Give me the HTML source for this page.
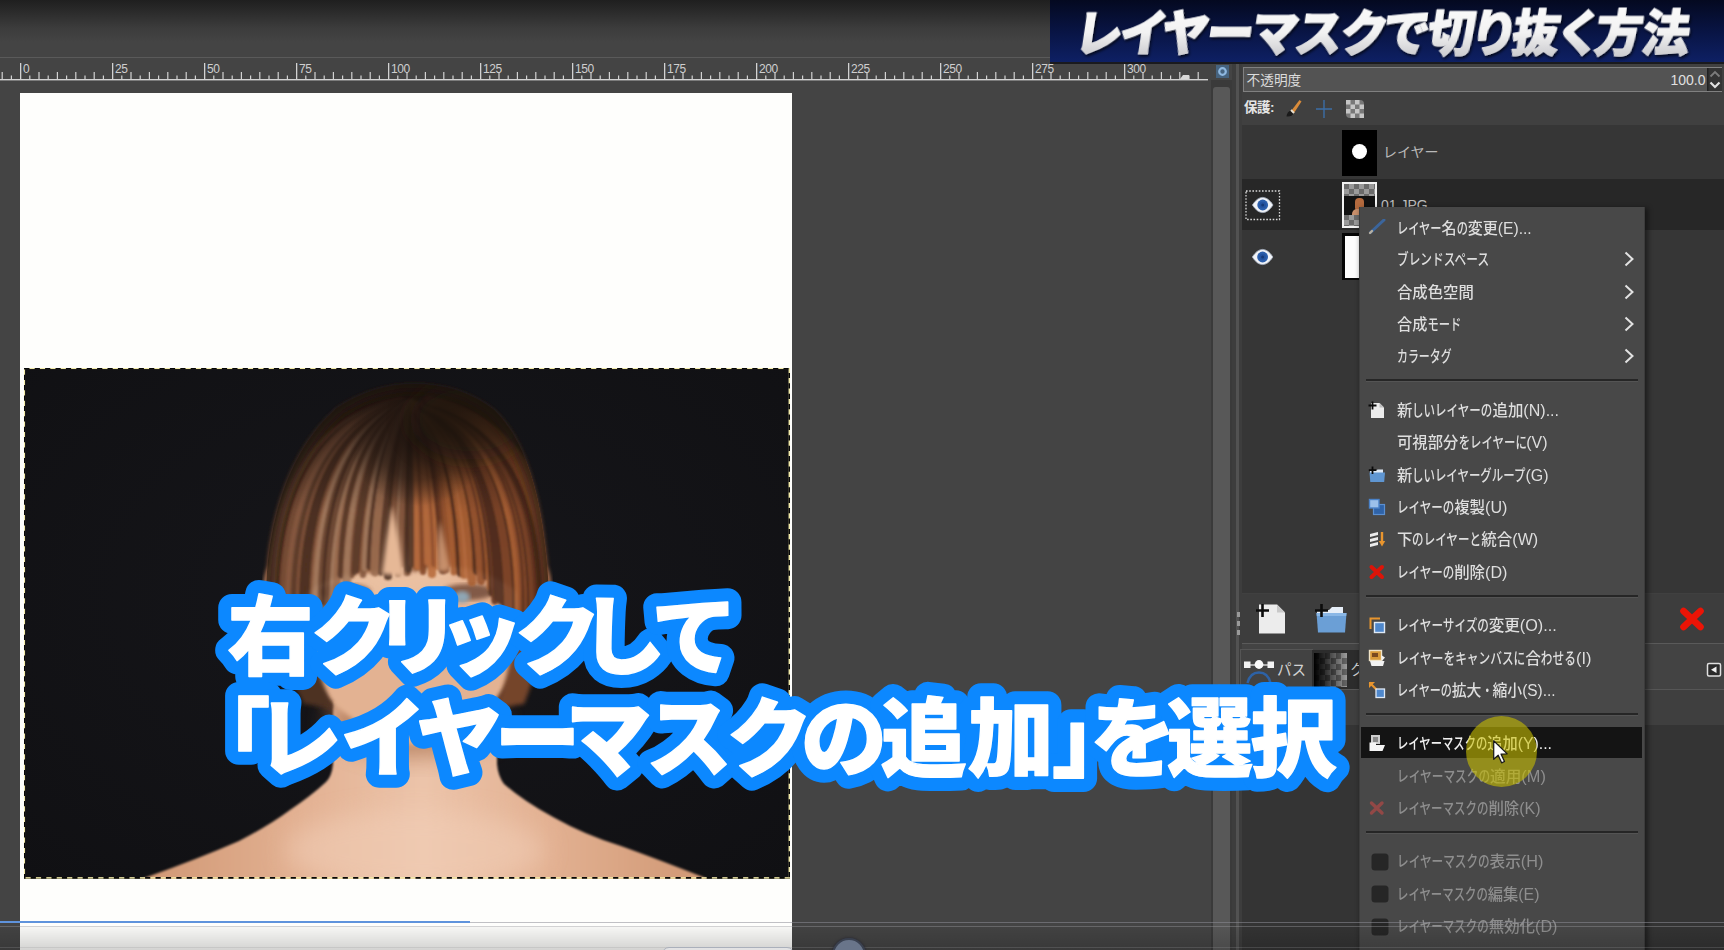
<!DOCTYPE html>
<html lang="ja">
<head>
<meta charset="utf-8">
<title>レイヤーマスクで切り抜く方法</title>
<style>
html,body{margin:0;padding:0;}
html{width:1724px;height:950px;overflow:hidden;}
body{width:1724px;height:950px;overflow:hidden;position:relative;background:#444444;
 font-family:"Liberation Sans","Noto Sans CJK JP",sans-serif;color:#d6d6d6;}
#root{position:absolute;left:0;top:0;width:1724px;height:950px;overflow:hidden;}
.abs{position:absolute;}
#topgrad{left:0;top:0;width:1724px;height:58px;background:linear-gradient(#1f1f1f 0px,#2b2b2b 12px,#3c3c3c 28px,#444 42px,#444 58px);}
#rulerline{left:0;top:57px;width:1232px;height:1px;background:#5a5a5a;}
#ruler{left:0;top:58px;width:1210px;height:24px;overflow:hidden;}
#ruler span{position:absolute;top:5px;font-size:12px;line-height:12px;color:#cfcfcf;letter-spacing:-0.5px;}
#canvas{left:20px;top:93px;width:772px;height:857px;background:#fefefc;}
#photo{left:24px;top:368px;width:766px;height:511px;}
/* scrollbar & divider */
#vtrack{left:1211px;top:80px;width:21px;height:870px;background:#3a3a3a;}
#vthumb{left:1213px;top:87px;width:17px;height:870px;background:#585858;border-radius:3px 3px 0 0;}
#corner{left:1216px;top:64.5px;width:13px;height:13px;background:#46637f;}
#divider{left:1232px;top:62px;width:10px;height:888px;background:#3d3d3d;}
#divider i{position:absolute;left:4px;top:0;width:3px;height:100%;background:#525252;}
/* right panel */
#panel{left:1242px;top:62px;width:482px;height:888px;background:#404040;}
.uitx{white-space:nowrap;}
.mi{font-weight:500;white-space:nowrap;font-size:15.4px;line-height:22px;height:22px;transform-origin:0 50%;font-family:"Liberation Sans","Noto Sans CJK JP",sans-serif;}
.mi .k{display:inline-block;transform:scaleX(0.745);transform-origin:0 50%;}
.mi .a{font-size:16px;}

</style>
</head>
<body>
<div id="root">
<div id="topgrad" class="abs"></div>
<div id="rulerline" class="abs"></div>
<div id="ruler" class="abs"><svg class="abs" style="left:0;top:0" width="1210" height="24" viewBox="0 0 1210 24"><rect x="0" y="21" width="1208" height="1.4" fill="#d2d2d2"/><rect x="1.6" y="14" width="1.2" height="8" fill="#d2d2d2"/><rect x="10.8" y="17.5" width="1.2" height="4.5" fill="#d2d2d2"/><rect x="20.0" y="5" width="1.3" height="17" fill="#d2d2d2"/><rect x="29.2" y="17.5" width="1.2" height="4.5" fill="#d2d2d2"/><rect x="38.4" y="14" width="1.2" height="8" fill="#d2d2d2"/><rect x="47.6" y="17.5" width="1.2" height="4.5" fill="#d2d2d2"/><rect x="56.8" y="14" width="1.2" height="8" fill="#d2d2d2"/><rect x="66.0" y="17.5" width="1.2" height="4.5" fill="#d2d2d2"/><rect x="75.2" y="14" width="1.2" height="8" fill="#d2d2d2"/><rect x="84.4" y="17.5" width="1.2" height="4.5" fill="#d2d2d2"/><rect x="93.6" y="14" width="1.2" height="8" fill="#d2d2d2"/><rect x="102.8" y="17.5" width="1.2" height="4.5" fill="#d2d2d2"/><rect x="112.0" y="5" width="1.3" height="17" fill="#d2d2d2"/><rect x="121.2" y="17.5" width="1.2" height="4.5" fill="#d2d2d2"/><rect x="130.4" y="14" width="1.2" height="8" fill="#d2d2d2"/><rect x="139.6" y="17.5" width="1.2" height="4.5" fill="#d2d2d2"/><rect x="148.8" y="14" width="1.2" height="8" fill="#d2d2d2"/><rect x="158.0" y="17.5" width="1.2" height="4.5" fill="#d2d2d2"/><rect x="167.2" y="14" width="1.2" height="8" fill="#d2d2d2"/><rect x="176.4" y="17.5" width="1.2" height="4.5" fill="#d2d2d2"/><rect x="185.6" y="14" width="1.2" height="8" fill="#d2d2d2"/><rect x="194.8" y="17.5" width="1.2" height="4.5" fill="#d2d2d2"/><rect x="204.0" y="5" width="1.3" height="17" fill="#d2d2d2"/><rect x="213.2" y="17.5" width="1.2" height="4.5" fill="#d2d2d2"/><rect x="222.4" y="14" width="1.2" height="8" fill="#d2d2d2"/><rect x="231.6" y="17.5" width="1.2" height="4.5" fill="#d2d2d2"/><rect x="240.8" y="14" width="1.2" height="8" fill="#d2d2d2"/><rect x="250.0" y="17.5" width="1.2" height="4.5" fill="#d2d2d2"/><rect x="259.2" y="14" width="1.2" height="8" fill="#d2d2d2"/><rect x="268.4" y="17.5" width="1.2" height="4.5" fill="#d2d2d2"/><rect x="277.6" y="14" width="1.2" height="8" fill="#d2d2d2"/><rect x="286.8" y="17.5" width="1.2" height="4.5" fill="#d2d2d2"/><rect x="296.0" y="5" width="1.3" height="17" fill="#d2d2d2"/><rect x="305.2" y="17.5" width="1.2" height="4.5" fill="#d2d2d2"/><rect x="314.4" y="14" width="1.2" height="8" fill="#d2d2d2"/><rect x="323.6" y="17.5" width="1.2" height="4.5" fill="#d2d2d2"/><rect x="332.8" y="14" width="1.2" height="8" fill="#d2d2d2"/><rect x="342.0" y="17.5" width="1.2" height="4.5" fill="#d2d2d2"/><rect x="351.2" y="14" width="1.2" height="8" fill="#d2d2d2"/><rect x="360.4" y="17.5" width="1.2" height="4.5" fill="#d2d2d2"/><rect x="369.6" y="14" width="1.2" height="8" fill="#d2d2d2"/><rect x="378.8" y="17.5" width="1.2" height="4.5" fill="#d2d2d2"/><rect x="388.0" y="5" width="1.3" height="17" fill="#d2d2d2"/><rect x="397.2" y="17.5" width="1.2" height="4.5" fill="#d2d2d2"/><rect x="406.4" y="14" width="1.2" height="8" fill="#d2d2d2"/><rect x="415.6" y="17.5" width="1.2" height="4.5" fill="#d2d2d2"/><rect x="424.8" y="14" width="1.2" height="8" fill="#d2d2d2"/><rect x="434.0" y="17.5" width="1.2" height="4.5" fill="#d2d2d2"/><rect x="443.2" y="14" width="1.2" height="8" fill="#d2d2d2"/><rect x="452.4" y="17.5" width="1.2" height="4.5" fill="#d2d2d2"/><rect x="461.6" y="14" width="1.2" height="8" fill="#d2d2d2"/><rect x="470.8" y="17.5" width="1.2" height="4.5" fill="#d2d2d2"/><rect x="480.0" y="5" width="1.3" height="17" fill="#d2d2d2"/><rect x="489.2" y="17.5" width="1.2" height="4.5" fill="#d2d2d2"/><rect x="498.4" y="14" width="1.2" height="8" fill="#d2d2d2"/><rect x="507.6" y="17.5" width="1.2" height="4.5" fill="#d2d2d2"/><rect x="516.8" y="14" width="1.2" height="8" fill="#d2d2d2"/><rect x="526.0" y="17.5" width="1.2" height="4.5" fill="#d2d2d2"/><rect x="535.2" y="14" width="1.2" height="8" fill="#d2d2d2"/><rect x="544.4" y="17.5" width="1.2" height="4.5" fill="#d2d2d2"/><rect x="553.6" y="14" width="1.2" height="8" fill="#d2d2d2"/><rect x="562.8" y="17.5" width="1.2" height="4.5" fill="#d2d2d2"/><rect x="572.0" y="5" width="1.3" height="17" fill="#d2d2d2"/><rect x="581.2" y="17.5" width="1.2" height="4.5" fill="#d2d2d2"/><rect x="590.4" y="14" width="1.2" height="8" fill="#d2d2d2"/><rect x="599.6" y="17.5" width="1.2" height="4.5" fill="#d2d2d2"/><rect x="608.8" y="14" width="1.2" height="8" fill="#d2d2d2"/><rect x="618.0" y="17.5" width="1.2" height="4.5" fill="#d2d2d2"/><rect x="627.2" y="14" width="1.2" height="8" fill="#d2d2d2"/><rect x="636.4" y="17.5" width="1.2" height="4.5" fill="#d2d2d2"/><rect x="645.6" y="14" width="1.2" height="8" fill="#d2d2d2"/><rect x="654.8" y="17.5" width="1.2" height="4.5" fill="#d2d2d2"/><rect x="664.0" y="5" width="1.3" height="17" fill="#d2d2d2"/><rect x="673.2" y="17.5" width="1.2" height="4.5" fill="#d2d2d2"/><rect x="682.4" y="14" width="1.2" height="8" fill="#d2d2d2"/><rect x="691.6" y="17.5" width="1.2" height="4.5" fill="#d2d2d2"/><rect x="700.8" y="14" width="1.2" height="8" fill="#d2d2d2"/><rect x="710.0" y="17.5" width="1.2" height="4.5" fill="#d2d2d2"/><rect x="719.2" y="14" width="1.2" height="8" fill="#d2d2d2"/><rect x="728.4" y="17.5" width="1.2" height="4.5" fill="#d2d2d2"/><rect x="737.6" y="14" width="1.2" height="8" fill="#d2d2d2"/><rect x="746.8" y="17.5" width="1.2" height="4.5" fill="#d2d2d2"/><rect x="756.0" y="5" width="1.3" height="17" fill="#d2d2d2"/><rect x="765.2" y="17.5" width="1.2" height="4.5" fill="#d2d2d2"/><rect x="774.4" y="14" width="1.2" height="8" fill="#d2d2d2"/><rect x="783.6" y="17.5" width="1.2" height="4.5" fill="#d2d2d2"/><rect x="792.8" y="14" width="1.2" height="8" fill="#d2d2d2"/><rect x="802.0" y="17.5" width="1.2" height="4.5" fill="#d2d2d2"/><rect x="811.2" y="14" width="1.2" height="8" fill="#d2d2d2"/><rect x="820.4" y="17.5" width="1.2" height="4.5" fill="#d2d2d2"/><rect x="829.6" y="14" width="1.2" height="8" fill="#d2d2d2"/><rect x="838.8" y="17.5" width="1.2" height="4.5" fill="#d2d2d2"/><rect x="848.0" y="5" width="1.3" height="17" fill="#d2d2d2"/><rect x="857.2" y="17.5" width="1.2" height="4.5" fill="#d2d2d2"/><rect x="866.4" y="14" width="1.2" height="8" fill="#d2d2d2"/><rect x="875.6" y="17.5" width="1.2" height="4.5" fill="#d2d2d2"/><rect x="884.8" y="14" width="1.2" height="8" fill="#d2d2d2"/><rect x="894.0" y="17.5" width="1.2" height="4.5" fill="#d2d2d2"/><rect x="903.2" y="14" width="1.2" height="8" fill="#d2d2d2"/><rect x="912.4" y="17.5" width="1.2" height="4.5" fill="#d2d2d2"/><rect x="921.6" y="14" width="1.2" height="8" fill="#d2d2d2"/><rect x="930.8" y="17.5" width="1.2" height="4.5" fill="#d2d2d2"/><rect x="940.0" y="5" width="1.3" height="17" fill="#d2d2d2"/><rect x="949.2" y="17.5" width="1.2" height="4.5" fill="#d2d2d2"/><rect x="958.4" y="14" width="1.2" height="8" fill="#d2d2d2"/><rect x="967.6" y="17.5" width="1.2" height="4.5" fill="#d2d2d2"/><rect x="976.8" y="14" width="1.2" height="8" fill="#d2d2d2"/><rect x="986.0" y="17.5" width="1.2" height="4.5" fill="#d2d2d2"/><rect x="995.2" y="14" width="1.2" height="8" fill="#d2d2d2"/><rect x="1004.4" y="17.5" width="1.2" height="4.5" fill="#d2d2d2"/><rect x="1013.6" y="14" width="1.2" height="8" fill="#d2d2d2"/><rect x="1022.8" y="17.5" width="1.2" height="4.5" fill="#d2d2d2"/><rect x="1032.0" y="5" width="1.3" height="17" fill="#d2d2d2"/><rect x="1041.2" y="17.5" width="1.2" height="4.5" fill="#d2d2d2"/><rect x="1050.4" y="14" width="1.2" height="8" fill="#d2d2d2"/><rect x="1059.6" y="17.5" width="1.2" height="4.5" fill="#d2d2d2"/><rect x="1068.8" y="14" width="1.2" height="8" fill="#d2d2d2"/><rect x="1078.0" y="17.5" width="1.2" height="4.5" fill="#d2d2d2"/><rect x="1087.2" y="14" width="1.2" height="8" fill="#d2d2d2"/><rect x="1096.4" y="17.5" width="1.2" height="4.5" fill="#d2d2d2"/><rect x="1105.6" y="14" width="1.2" height="8" fill="#d2d2d2"/><rect x="1114.8" y="17.5" width="1.2" height="4.5" fill="#d2d2d2"/><rect x="1124.0" y="5" width="1.3" height="17" fill="#d2d2d2"/><rect x="1133.2" y="17.5" width="1.2" height="4.5" fill="#d2d2d2"/><rect x="1142.4" y="14" width="1.2" height="8" fill="#d2d2d2"/><rect x="1151.6" y="17.5" width="1.2" height="4.5" fill="#d2d2d2"/><rect x="1160.8" y="14" width="1.2" height="8" fill="#d2d2d2"/><rect x="1170.0" y="17.5" width="1.2" height="4.5" fill="#d2d2d2"/><rect x="1179.2" y="14" width="1.2" height="8" fill="#d2d2d2"/><rect x="1188.4" y="17.5" width="1.2" height="4.5" fill="#d2d2d2"/><rect x="1197.6" y="14" width="1.2" height="8" fill="#d2d2d2"/><path d="M1180 21 L1183 17 L1189 17 L1189 21 Z" fill="#d8d8d8"/></svg><span style="left:23.1px">0</span><span style="left:115.1px">25</span><span style="left:207.1px">50</span><span style="left:299.1px">75</span><span style="left:391.1px">100</span><span style="left:483.1px">125</span><span style="left:575.1px">150</span><span style="left:667.1px">175</span><span style="left:759.1px">200</span><span style="left:851.1px">225</span><span style="left:943.1px">250</span><span style="left:1035.1px">275</span><span style="left:1127.1px">300</span></div>
<div id="canvas" class="abs"></div>
<div id="photo" class="abs"><svg width="766" height="511" viewBox="24 368 766 511" style="position:absolute;left:0;top:0;display:block">
<defs>
<radialGradient id="bgG" cx="0.5" cy="0.45" r="0.75"><stop offset="0" stop-color="#16161a"/><stop offset="1" stop-color="#101013"/></radialGradient>
<linearGradient id="hairG" x1="0" y1="0" x2="0" y2="1"><stop offset="0" stop-color="#2a1d18"/><stop offset="0.35" stop-color="#553626"/><stop offset="0.7" stop-color="#8c5436"/><stop offset="1" stop-color="#87502f"/></linearGradient>
<radialGradient id="partG" cx="0.5" cy="0.5" r="0.5"><stop offset="0" stop-color="#1d130e" stop-opacity="0.95"/><stop offset="0.6" stop-color="#1d130e" stop-opacity="0.55"/><stop offset="1" stop-color="#1d130e" stop-opacity="0"/></radialGradient>
<linearGradient id="topD" x1="0" y1="0" x2="0" y2="1"><stop offset="0" stop-color="#1a110d" stop-opacity="0.9"/><stop offset="1" stop-color="#1a110d" stop-opacity="0"/></linearGradient>
<linearGradient id="shG" x1="0" y1="0" x2="1" y2="0"><stop offset="0" stop-color="#cf9672"/><stop offset="0.28" stop-color="#e2b091"/><stop offset="0.5" stop-color="#ecc4aa"/><stop offset="0.72" stop-color="#e2b091"/><stop offset="1" stop-color="#cf9672"/></linearGradient>
<filter id="b1" x="-10%" y="-10%" width="120%" height="120%"><feGaussianBlur stdDeviation="1.3"/></filter>
<filter id="b2" x="-10%" y="-10%" width="120%" height="120%"><feGaussianBlur stdDeviation="2.2"/></filter>
<filter id="b5" x="-20%" y="-20%" width="140%" height="140%"><feGaussianBlur stdDeviation="6"/></filter>
<filter id="b10" x="-30%" y="-30%" width="160%" height="160%"><feGaussianBlur stdDeviation="12"/></filter>
<clipPath id="pc"><rect x="24" y="368" width="766" height="511"/></clipPath>
<clipPath id="hc"><path d="M268 650 Q263 590 270 545 Q284 455 337 408 Q374 384 414 384 Q460 384 494 410 Q534 448 545 545 Q551 590 548 650 Z"/></clipPath>
</defs>
<g clip-path="url(#pc)">
<rect x="24" y="368" width="766" height="511" fill="url(#bgG)"/>
<!-- back hair behind neck -->
<path d="M300 600 Q296 680 330 712 L350 700 L350 600 Z" fill="#5b3825" filter="url(#b5)"/>
<path d="M525 600 Q532 680 498 712 L478 700 L478 600 Z" fill="#5b3825" filter="url(#b5)"/>
<!-- shoulders -->
<path d="M132 884 L147 877 Q200 858 239 841 Q270 825 290 810 Q312 795 326 782 Q332 776 333 764 L333 700 L497 700 L497 764 Q498 776 504 784 Q525 802 553 817 Q585 835 621 846 Q660 860 703 877 L716 884 Z" fill="url(#shG)" filter="url(#b1)"/>
<ellipse cx="415" cy="850" rx="130" ry="40" fill="#f2cfb8" opacity="0.55" filter="url(#b10)"/>
<!-- neck shadow -->
<ellipse cx="415" cy="722" rx="86" ry="34" fill="#a8704e" opacity="0.75" filter="url(#b10)"/>
<!-- ears -->
<ellipse cx="272" cy="588" rx="8" ry="22" fill="#c98f6c" filter="url(#b2)"/>
<ellipse cx="543" cy="588" rx="8" ry="22" fill="#b97f5c" filter="url(#b2)"/>
<!-- face -->
<path d="M280 560 Q282 650 330 700 Q380 745 412 745 Q450 745 495 700 Q538 650 538 560 Q538 470 410 470 Q280 470 280 560 Z" fill="#e3b292" filter="url(#b2)"/>
<ellipse cx="400" cy="560" rx="60" ry="50" fill="#ecc4a6" opacity="0.8" filter="url(#b10)"/>
<ellipse cx="345" cy="592" rx="26" ry="8" fill="#6a4434" opacity="0.8" filter="url(#b2)"/>
<ellipse cx="468" cy="592" rx="26" ry="8" fill="#6a4434" opacity="0.8" filter="url(#b2)"/>
<ellipse cx="462" cy="597" rx="8" ry="6" fill="#8fa6b4" filter="url(#b2)"/>
<!-- side hair -->
<path d="M274 545 L304 545 Q300 620 316 660 Q324 690 334 708 L304 704 Q280 660 270 610 Z" fill="#4e3021" filter="url(#b2)"/>
<path d="M542 545 L518 545 Q520 620 510 660 Q504 690 496 708 L524 704 Q542 660 546 610 Z" fill="#75442a" filter="url(#b2)"/>
<!-- hair dome -->
<path d="M268 640 Q263 590 270 545 Q284 455 337 408 Q374 384 414 384 Q460 384 494 410 Q534 448 545 545 Q551 590 548 640 Q535 600 512 588 Q480 566 440 566 L412 572 Q402 535 392 500 Q383 540 378 572 Q330 572 300 598 Q278 620 268 640 Z" fill="url(#hairG)" filter="url(#b2)"/>
<g clip-path="url(#hc)"><g fill="none" stroke-linecap="round" filter="url(#b1)" opacity="0.9"><path d="M401 400 Q258 433 274 642" stroke="#6d4a36" stroke-width="6.9"/><path d="M401 400 Q263 433 277 638" stroke="#6d4a36" stroke-width="6.5"/><path d="M402 401 Q266 434 279 636" stroke="#4a2e20" stroke-width="5.1"/><path d="M402 401 Q271 436 283 642" stroke="#7a4f38" stroke-width="6.3"/><path d="M403 402 Q278 436 288 629" stroke="#5a3a2a" stroke-width="5.1"/><path d="M403 402 Q279 437 289 633" stroke="#85593f" stroke-width="7.1"/><path d="M403 402 Q285 438 293 630" stroke="#6d4a36" stroke-width="4.8"/><path d="M403 402 Q288 439 295 634" stroke="#5a3a2a" stroke-width="7.1"/><path d="M404 403 Q293 439 299 625" stroke="#7a4f38" stroke-width="5.6"/><path d="M404 404 Q297 440 302 626" stroke="#4a2e20" stroke-width="5.8"/><path d="M405 403 Q303 440 307 616" stroke="#4a2e20" stroke-width="5.2"/><path d="M405 404 Q305 440 309 613" stroke="#4a2e20" stroke-width="7.1"/><path d="M405 404 Q311 442 313 615" stroke="#7a4f38" stroke-width="7.1"/><path d="M405 406 Q313 444 315 621" stroke="#9a6c50" stroke-width="7.5"/><path d="M406 404 Q316 444 317 618" stroke="#a37a5e" stroke-width="8.2"/><path d="M406 405 Q320 443 321 610" stroke="#6d4a36" stroke-width="6.6"/><path d="M406 402 Q324 443 324 603" stroke="#4a2e20" stroke-width="5.1"/><path d="M407 407 Q328 444 328 605" stroke="#6d4a36" stroke-width="6.5"/><path d="M407 407 Q333 446 332 610" stroke="#a37a5e" stroke-width="5.8"/><path d="M407 408 Q336 445 335 599" stroke="#a37a5e" stroke-width="5.2"/><path d="M408 403 Q339 445 337 596" stroke="#9a6c50" stroke-width="7.2"/><path d="M408 405 Q344 441 341 575" stroke="#5a3a2a" stroke-width="7.0"/><path d="M409 406 Q349 444 346 582" stroke="#7a4f38" stroke-width="7.5"/><path d="M409 408 Q350 445 347 585" stroke="#a37a5e" stroke-width="8.1"/><path d="M409 403 Q355 444 352 576" stroke="#7a4f38" stroke-width="4.8"/><path d="M409 404 Q358 443 354 573" stroke="#5a3a2a" stroke-width="4.7"/><path d="M410 403 Q361 444 357 571" stroke="#5a3a2a" stroke-width="4.6"/><path d="M410 404 Q367 446 363 575" stroke="#85593f" stroke-width="6.1"/><path d="M410 411 Q369 445 365 568" stroke="#a37a5e" stroke-width="6.6"/><path d="M411 404 Q373 445 369 567" stroke="#5a3a2a" stroke-width="5.7"/><path d="M411 403 Q378 446 374 567" stroke="#a37a5e" stroke-width="6.9"/><path d="M411 403 Q379 448 375 572" stroke="#9a6c50" stroke-width="8.9"/><path d="M412 406 Q385 450 381 573" stroke="#5a3a2a" stroke-width="5.3"/><path d="M412 412 Q388 450 384 570" stroke="#5a3a2a" stroke-width="5.5"/><path d="M413 413 Q391 452 388 576" stroke="#4a2e20" stroke-width="8.2"/><path d="M413 410 Q395 450 392 565" stroke="#5a3a2a" stroke-width="4.6"/><path d="M413 407 Q396 450 393 565" stroke="#7a4f38" stroke-width="8.8"/><path d="M413 416 Q400 454 398 574" stroke="#a37a5e" stroke-width="6.1"/><path d="M414 406 Q403 451 401 564" stroke="#85593f" stroke-width="7.3"/><path d="M414 410 Q408 455 407 572" stroke="#7a4f38" stroke-width="8.1"/><path d="M414 416 Q409 455 408 569" stroke="#4a2e20" stroke-width="7.9"/><path d="M415 415 Q413 454 413 563" stroke="#5a3a2a" stroke-width="8.1"/><path d="M415 409 Q418 454 418 566" stroke="#b86c3e" stroke-width="7.8"/><path d="M415 406 Q419 453 420 562" stroke="#b86c3e" stroke-width="8.1"/><path d="M416 417 Q422 455 423 572" stroke="#86482a" stroke-width="6.1"/><path d="M416 404 Q426 451 428 562" stroke="#b86c3e" stroke-width="7.4"/><path d="M417 409 Q430 454 432 574" stroke="#b86c3e" stroke-width="8.2"/><path d="M417 407 Q432 450 435 564" stroke="#96522e" stroke-width="7.1"/><path d="M417 405 Q435 450 438 567" stroke="#b86c3e" stroke-width="6.1"/><path d="M417 414 Q439 450 443 570" stroke="#643622" stroke-width="8.6"/><path d="M418 409 Q443 449 446 570" stroke="#7a4228" stroke-width="6.5"/><path d="M418 412 Q445 447 449 563" stroke="#96522e" stroke-width="6.6"/><path d="M419 406 Q450 448 454 572" stroke="#a85e32" stroke-width="7.0"/><path d="M419 409 Q454 446 458 566" stroke="#96522e" stroke-width="5.7"/><path d="M419 408 Q457 447 461 573" stroke="#4e2c1a" stroke-width="8.6"/><path d="M419 408 Q460 447 464 575" stroke="#a85e32" stroke-width="7.6"/><path d="M420 407 Q464 446 468 575" stroke="#b86c3e" stroke-width="7.6"/><path d="M420 405 Q468 447 472 582" stroke="#a85e32" stroke-width="8.7"/><path d="M421 403 Q472 443 476 572" stroke="#a85e32" stroke-width="4.8"/><path d="M421 408 Q474 443 477 571" stroke="#4e2c1a" stroke-width="8.5"/><path d="M421 408 Q477 444 481 581" stroke="#96522e" stroke-width="8.5"/><path d="M422 409 Q483 442 486 577" stroke="#643622" stroke-width="6.7"/><path d="M422 403 Q487 443 490 587" stroke="#a85e32" stroke-width="6.8"/><path d="M422 404 Q489 445 491 594" stroke="#4e2c1a" stroke-width="4.6"/><path d="M423 402 Q493 445 495 601" stroke="#643622" stroke-width="7.3"/><path d="M423 408 Q497 443 498 597" stroke="#4e2c1a" stroke-width="8.9"/><path d="M423 402 Q500 444 501 602" stroke="#4e2c1a" stroke-width="5.7"/><path d="M423 407 Q504 444 504 607" stroke="#4e2c1a" stroke-width="5.7"/><path d="M424 405 Q508 445 507 617" stroke="#86482a" stroke-width="4.9"/><path d="M424 404 Q511 444 510 616" stroke="#7a4228" stroke-width="8.7"/><path d="M425 402 Q517 443 515 621" stroke="#4e2c1a" stroke-width="4.8"/><path d="M425 403 Q522 442 519 618" stroke="#a85e32" stroke-width="8.7"/><path d="M425 403 Q524 440 521 614" stroke="#96522e" stroke-width="5.0"/><path d="M425 402 Q528 440 524 615" stroke="#643622" stroke-width="5.9"/><path d="M426 402 Q534 439 528 623" stroke="#96522e" stroke-width="6.1"/><path d="M426 401 Q535 439 530 623" stroke="#4e2c1a" stroke-width="7.0"/><path d="M426 403 Q540 439 533 629" stroke="#7a4228" stroke-width="8.2"/><path d="M427 402 Q545 438 537 632" stroke="#643622" stroke-width="6.8"/><path d="M427 401 Q550 439 541 643" stroke="#4e2c1a" stroke-width="7.7"/><path d="M428 401 Q554 436 544 636" stroke="#7a4228" stroke-width="5.1"/><path d="M428 401 Q557 437 545 643" stroke="#96522e" stroke-width="4.9"/><path d="M428 401 Q564 436 550 649" stroke="#96522e" stroke-width="5.6"/><path d="M428 400 Q566 434 552 643" stroke="#a85e32" stroke-width="5.7"/><path d="M429 400 Q573 434 557 655" stroke="#96522e" stroke-width="8.8"/></g>
<rect x="250" y="380" width="320" height="130" fill="url(#topD)"/>
<path d="M268 650 Q263 590 270 545 Q284 455 337 408 Q374 384 414 384 Q460 384 494 410 Q534 448 545 545 Q551 590 548 650" fill="none" stroke="#24160f" stroke-width="16" opacity="0.75" filter="url(#b5)"/>
<ellipse cx="418" cy="440" rx="70" ry="66" fill="url(#partG)"/>
<ellipse cx="470" cy="420" rx="60" ry="40" fill="#1d130e" opacity="0.45" filter="url(#b10)"/>
</g>
<!-- forehead gap -->
<path d="M392 506 Q386 540 382 574 L404 576 Q399 540 392 506 Z" fill="#e6b896" filter="url(#b2)"/>
<path d="M440 520 Q436 550 438 572 L450 570 Q446 548 440 520 Z" fill="#d9a27c" opacity="0.8" filter="url(#b2)"/>
</g>
<!-- layer boundary marching ants -->
<rect x="24.3" y="368.3" width="765" height="509.6" fill="none" stroke="#f2eaa8" stroke-width="1.5"/>
<rect x="24.3" y="368.3" width="765" height="509.6" fill="none" stroke="#080808" stroke-width="1.7" stroke-dasharray="5.2 5.2"/>
</svg></div>
<div id="vtrack" class="abs"></div>
<div id="vthumb" class="abs"></div>
<div id="corner" class="abs"><svg width="13" height="13" viewBox="0 0 13 13" style="display:block"><circle cx="6.5" cy="6.5" r="3.3" fill="none" stroke="#8fb8e0" stroke-width="2.2"/></svg></div>
<div id="divider" class="abs"><i></i></div>
<div id="panel" class="abs"></div>
<div id="pn">
<!-- opacity -->
<div class="abs" style="left:1243px;top:67px;width:477px;height:23px;background:#535353;border:1px solid #808080;"></div>
<div class="abs uitx" style="left:1246.5px;top:71.5px;font-size:13.7px;line-height:18px;color:#dcdcdc;">不透明度</div>
<div class="abs uitx" style="left:1640px;top:71px;width:65.5px;text-align:right;font-size:14px;line-height:18px;color:#e0e0e0;">100.0</div>
<svg class="abs" style="left:1707px;top:68px" width="15" height="23" viewBox="0 0 15 23"><rect x="0" y="0" width="15" height="23" fill="#343434"/><rect x="0" y="0" width="1.5" height="23" fill="#222"/><path d="M3.5 8.5 L8 4 L12.5 8.5" stroke="#7c7c7c" stroke-width="1.8" fill="none"/><path d="M3.5 14.5 L8 19 L12.5 14.5" stroke="#e0e0e0" stroke-width="2.2" fill="none"/></svg>
<!-- protect -->
<div class="abs uitx" style="left:1244px;top:98px;font-size:13.5px;line-height:19px;color:#e4e4e4;font-weight:bold;letter-spacing:-0.5px;">保護:</div>
<svg class="abs" style="left:1284px;top:98px" width="90" height="22" viewBox="0 0 90 22">
<path d="M2.5 18.5 Q3 13.5 7 12.5 L9.5 15 Q8.5 19 2.5 18.5 Z" fill="#1a1a1a"/>
<path d="M7.5 12.5 L15.5 2 L17.5 3.5 L10 15 Z" fill="#d98b3a"/>
<path d="M7 12 L10 15" stroke="#e8e0d0" stroke-width="2"/>
<path d="M40 2 V20 M32 11 H48" stroke="#3b6da6" stroke-width="1.4"/>
<g fill="#c6c6c6"><rect x="62" y="2" width="18" height="18" rx="4" fill="#787878"/>
<rect x="62" y="2" width="4.5" height="4.5"/><rect x="71" y="2" width="4.5" height="4.5"/><rect x="66.5" y="6.5" width="4.5" height="4.5"/><rect x="75.5" y="6.5" width="4.5" height="4.5"/><rect x="62" y="11" width="4.5" height="4.5"/><rect x="71" y="11" width="4.5" height="4.5"/><rect x="66.5" y="15.5" width="4.5" height="4.5"/><rect x="75.5" y="15.5" width="4.5" height="4.5"/></g>
</svg>
<!-- layer list -->
<div class="abs" style="left:1242px;top:124.5px;width:482px;height:468.5px;background:#363636;"></div>
<div class="abs" style="left:1242px;top:179px;width:482px;height:51px;background:#272727;"></div>
<!-- row1 -->
<div class="abs" style="left:1342px;top:130px;width:35px;height:46px;background:#000;"></div>
<div class="abs" style="left:1351.5px;top:144px;width:15px;height:15px;border-radius:50%;background:#fff;"></div>
<div class="abs uitx" style="left:1383px;top:142px;font-size:14px;line-height:20px;color:#b9b9b9;">レイヤー</div>
<!-- row2 -->
<svg class="abs" style="left:1245px;top:190px" width="36" height="31" viewBox="0 0 36 31"><rect x="1" y="1" width="33.5" height="28.5" fill="none" stroke="#d8d8d8" stroke-width="1.3" stroke-dasharray="1.6 1.6"/>
<g transform="translate(17.7 15)"><path d="M-10.3 0 Q-5.5 -7.6 0 -7.6 Q5.5 -7.6 10.3 0 Q5.5 7.6 0 7.6 Q-5.5 7.6 -10.3 0 Z" fill="#f2f4f8" stroke="#aab4c4" stroke-width="0.8"/><circle r="5.4" fill="#2c5fac"/><circle r="3.3" fill="#2453a0"/><circle r="1.5" fill="#163a78"/></g></svg>
<div class="abs" style="left:1342px;top:182px;width:31px;height:42px;border:2px solid #f2f2f2;background:#111;overflow:hidden;">
 <div style="position:absolute;left:0;top:0;width:31px;height:12px;background:repeating-conic-gradient(#9a9a9a 0% 25%,#6a6a6a 0% 50%) 0 0/10px 10px;"></div>
 <div style="position:absolute;left:0;top:31px;width:31px;height:12px;background:repeating-conic-gradient(#9a9a9a 0% 25%,#6a6a6a 0% 50%) 0 0/10px 10px;"></div>
 <div style="position:absolute;left:11px;top:14px;width:9px;height:12px;border-radius:4px 4px 2px 2px;background:#b46a3e;"></div>
 <div style="position:absolute;left:8px;top:25px;width:15px;height:6px;border-radius:5px 5px 0 0;background:#c9906c;"></div>
</div>
<div class="abs uitx" style="left:1381px;top:195px;font-size:14px;line-height:20px;color:#bdbdbd;">01.JPG</div>
<!-- row3 -->
<svg class="abs" style="left:1250px;top:248px" width="26" height="20" viewBox="0 0 26 20"><g transform="translate(12.6 9)"><path d="M-10.3 0 Q-5.5 -7.6 0 -7.6 Q5.5 -7.6 10.3 0 Q5.5 7.6 0 7.6 Q-5.5 7.6 -10.3 0 Z" fill="#f2f4f8" stroke="#aab4c4" stroke-width="0.8"/><circle r="5.4" fill="#2c5fac"/><circle r="3.3" fill="#2453a0"/><circle r="1.5" fill="#163a78"/></g></svg>
<div class="abs" style="left:1342px;top:233px;width:35px;height:47px;background:#050505;"></div>
<div class="abs" style="left:1344.5px;top:236px;width:30px;height:41.5px;background:#fdfdfd;"></div>
<!-- toolbar -->
<div class="abs" style="left:1242px;top:593.5px;width:482px;height:50px;background:#3d3d3d;"></div>
<div class="abs" style="left:1242px;top:643px;width:482px;height:1px;background:#5a5a5a;"></div>
<div class="abs" style="left:1237px;top:612px;width:3px;height:25px;background:repeating-linear-gradient(#9a9a9a 0 5px,transparent 5px 9px);"></div>
<svg class="abs" style="left:1254px;top:602px" width="34" height="34" viewBox="0 0 34 34"><path d="M5 2.5 H23 L31 10.5 V31.5 H5 Z" fill="#ececec"/><path d="M23 2.5 V10.5 H31 Z" fill="#c8c8c8"/><path d="M8.5 2 V15 M2 8.5 H15" stroke="#0c0c0c" stroke-width="2.6"/></svg>
<svg class="abs" style="left:1313px;top:602px" width="36" height="34" viewBox="0 0 36 34"><path d="M4 8 H16 L19 5 H30 V12 H4 Z" fill="#e6eef8"/><path d="M3.5 11 H33.5 L32 30.5 H5 Z" fill="#6b9fd6"/><path d="M3.5 11 H33.5 L33.2 14 H3.8 Z" fill="#8ab7e6"/><path d="M8.5 2 V15 M2 8.5 H15" stroke="#0c0c0c" stroke-width="2.6"/></svg>
<svg class="abs" style="left:1678px;top:606px" width="28" height="26" viewBox="0 0 28 26"><path d="M5.5 5 L22.5 21 M22.5 5 L5.5 21" stroke="#ec1406" stroke-width="6.6" stroke-linecap="round"/></svg>
<!-- tabs row -->
<div class="abs" style="left:1242px;top:644px;width:482px;height:45px;background:#434343;"></div>
<div class="abs" style="left:1242px;top:689px;width:482px;height:1px;background:#565656;"></div>
<div class="abs" style="left:1240px;top:649px;width:71px;height:41px;border:1px solid #555;border-bottom:none;background:#424242;"></div>
<svg class="abs" style="left:1242px;top:656px" width="34" height="32" viewBox="0 0 34 32"><path d="M3 9 H31" stroke="#dcdcdc" stroke-width="1.4"/><rect x="2" y="5.5" width="6.5" height="6.5" fill="#f2f2f2"/><rect x="25.5" y="5.5" width="6.5" height="6.5" fill="#f2f2f2"/><circle cx="17" cy="8.5" r="4.4" fill="#fafafa"/><path d="M5.5 27 Q8 16.5 17 16.5 Q26 16.5 28.5 27" stroke="#2d62a6" stroke-width="2.4" fill="none"/></svg>
<div class="abs uitx" style="left:1277px;top:660px;font-size:14.5px;line-height:20px;color:#d2d2d2;">パス</div>
<div class="abs" style="left:1312px;top:650px;width:60px;height:39px;background:#2c2c2c;"></div>
<div class="abs" style="left:1314px;top:653px;width:33px;height:34px;background:linear-gradient(90deg,#000 0%,rgba(0,0,0,0.75) 30%,rgba(0,0,0,0) 100%),repeating-conic-gradient(#9c9c9c 0% 25%,#666 0% 50%) 0 0/11px 11px;"></div>
<div class="abs uitx" style="left:1350px;top:660px;font-size:14.5px;line-height:20px;color:#d2d2d2;">ク</div>
<svg class="abs" style="left:1705.5px;top:662px" width="16" height="16" viewBox="0 0 16 16"><rect x="1.5" y="1.5" width="13" height="12.5" rx="1.5" fill="#2a2a2a" stroke="#e0e0e0" stroke-width="1.5"/><path d="M10.5 4.5 V11 L5 7.75 Z" fill="#f0f0f0"/></svg>
<!-- lower -->
<div class="abs" style="left:1242px;top:690px;width:482px;height:35px;background:#3f3f3f;"></div>
<div class="abs" style="left:1242px;top:725px;width:482px;height:225px;background:#343434;"></div>
</div>

<div id="menu" class="abs" style="left:1359px;top:206.5px;width:286px;height:760px;background:#484848;box-shadow:2px 2px 5px 1px rgba(0,0,0,0.45), inset 1px 0 0 #3c3c3c, inset -1px 0 0 #3c3c3c;"></div>
<div class="abs mi" id="mi0" style="left:1397px;top:217.6px;color:#dedede;transform:scaleX(0.9777);"><span class="k" style="margin-right:-15.71px">レイヤー</span>名<span class="k" style="margin-right:-3.93px">の</span>変更<span class="a">(E)...</span></div>
<div class="abs" style="left:1368.0px;top:218.6px;width:18px;height:18px;"><svg viewBox="0 0 18 18" width="18" height="18"><path d="M2.5 13.5 L16 1" stroke="#3b659c" stroke-width="3" stroke-linecap="round"/><path d="M2 14 L4 12" stroke="#b8b0a0" stroke-width="2.4" stroke-linecap="round"/></svg></div>
<div class="abs mi" id="mi1" style="left:1397px;top:249.3px;color:#dedede;transform:scaleX(1.0192);"><span class="k" style="margin-right:-31.42px">ブレンドスペース</span></div>
<svg class="abs" style="left:1622px;top:250.3px" width="14" height="18" viewBox="0 0 14 18"><path d="M3.5 2.5 L10.5 9 L3.5 15.5" stroke="#e2e2e2" stroke-width="2" fill="none" stroke-linejoin="miter"/></svg>
<div class="abs mi" id="mi2" style="left:1397px;top:281.6px;color:#dedede;transform:scaleX(0.9978);">合成色空間</div>
<svg class="abs" style="left:1622px;top:282.6px" width="14" height="18" viewBox="0 0 14 18"><path d="M3.5 2.5 L10.5 9 L3.5 15.5" stroke="#e2e2e2" stroke-width="2" fill="none" stroke-linejoin="miter"/></svg>
<div class="abs mi" id="mi3" style="left:1397px;top:313.6px;color:#dedede;transform:scaleX(0.9844);">合成<span class="k" style="margin-right:-11.78px">モード</span></div>
<svg class="abs" style="left:1622px;top:314.6px" width="14" height="18" viewBox="0 0 14 18"><path d="M3.5 2.5 L10.5 9 L3.5 15.5" stroke="#e2e2e2" stroke-width="2" fill="none" stroke-linejoin="miter"/></svg>
<div class="abs mi" id="mi4" style="left:1397px;top:345.9px;color:#dedede;transform:scaleX(0.9539);"><span class="k" style="margin-right:-19.64px">カラータグ</span></div>
<svg class="abs" style="left:1622px;top:346.9px" width="14" height="18" viewBox="0 0 14 18"><path d="M3.5 2.5 L10.5 9 L3.5 15.5" stroke="#e2e2e2" stroke-width="2" fill="none" stroke-linejoin="miter"/></svg>
<div class="abs" style="left:1366px;top:379.0px;width:272px;height:2px;background:#262626;"></div><div class="abs" style="left:1366px;top:381.0px;width:272px;height:1px;background:#545454;"></div>
<div class="abs mi" id="mi5" style="left:1397px;top:400.0px;color:#dedede;transform:scaleX(1.0028);">新<span class="k" style="margin-right:-27.49px">しいレイヤーの</span>追加<span class="a">(N)...</span></div>
<div class="abs" style="left:1368.0px;top:401.0px;width:18px;height:18px;"><svg viewBox="0 0 18 18" width="18" height="18"><path d="M3 2 H11.5 L16 6.5 V17 H3 Z" fill="#ececec"/><path d="M11.5 2 V6.5 H16 Z" fill="#bdbdbd"/><path d="M4.5 0.5 V8.5 M0.5 4.5 H8.5" stroke="#0a0a0a" stroke-width="1.8"/></svg></div>
<div class="abs mi" id="mi6" style="left:1397px;top:432.2px;color:#dedede;transform:scaleX(0.9950);">可視部分<span class="k" style="margin-right:-23.56px">をレイヤーに</span><span class="a">(V)</span></div>
<div class="abs mi" id="mi7" style="left:1397px;top:464.5px;color:#dedede;transform:scaleX(0.9988);">新<span class="k" style="margin-right:-39.27px">しいレイヤーグループ</span><span class="a">(G)</span></div>
<div class="abs" style="left:1368.0px;top:465.5px;width:18px;height:18px;"><svg viewBox="0 0 18 18" width="18" height="18"><path d="M2 5 H8 L9.5 3.5 H15 V7 H2 Z" fill="#dfe9f5"/><path d="M1.5 6.5 H17 L16.2 16 H2.3 Z" fill="#5f96d2"/><path d="M4.5 0.5 V8 M0.8 4.2 H8.2" stroke="#0a0a0a" stroke-width="1.8"/></svg></div>
<div class="abs mi" id="mi8" style="left:1397px;top:496.8px;color:#dedede;transform:scaleX(1.0046);"><span class="k" style="margin-right:-19.64px">レイヤーの</span>複製<span class="a">(U)</span></div>
<div class="abs" style="left:1368.0px;top:497.8px;width:18px;height:18px;"><svg viewBox="0 0 18 18" width="18" height="18"><rect x="5.5" y="6.5" width="11" height="10" fill="#2f63a8" stroke="#5b8fd0" stroke-width="1.2"/><rect x="1.5" y="1.5" width="9.5" height="8.5" fill="#9cc0ea" stroke="#4a82c8" stroke-width="1.4"/></svg></div>
<div class="abs mi" id="mi9" style="left:1397px;top:529.2px;color:#dedede;transform:scaleX(1.0063);">下<span class="k" style="margin-right:-23.56px">のレイヤーと</span>統合<span class="a">(W)</span></div>
<div class="abs" style="left:1368.0px;top:530.2px;width:18px;height:18px;"><svg viewBox="0 0 18 18" width="18" height="18"><path d="M2 4 L10 2 L10 5 L2 7 Z M2 9 L10 7 L10 10 L2 12 Z M2 14 L10 12 L10 15 L2 17 Z" fill="#ececec"/><path d="M14 2 V13" stroke="#e8952e" stroke-width="2.4"/><path d="M10.8 11 H17.2 L14 16.5 Z" fill="#e8952e"/></svg></div>
<div class="abs mi" id="mi10" style="left:1397px;top:561.6px;color:#dedede;transform:scaleX(1.0046);"><span class="k" style="margin-right:-19.64px">レイヤーの</span>削除<span class="a">(D)</span></div>
<div class="abs" style="left:1368.0px;top:562.6px;width:18px;height:18px;"><svg viewBox="0 0 18 18" width="18" height="18"><path d="M3.5 4 L14 14 M14 4 L3.5 14" stroke="#dd1408" stroke-width="4" stroke-linecap="round"/></svg></div>
<div class="abs" style="left:1366px;top:595.0px;width:272px;height:2px;background:#262626;"></div><div class="abs" style="left:1366px;top:597.0px;width:272px;height:1px;background:#545454;"></div>
<div class="abs mi" id="mi11" style="left:1397px;top:615.0px;color:#dedede;transform:scaleX(1.0125);"><span class="k" style="margin-right:-31.42px">レイヤーサイズの</span>変更<span class="a">(O)...</span></div>
<div class="abs" style="left:1368.0px;top:616.0px;width:18px;height:18px;"><svg viewBox="0 0 18 18" width="18" height="18"><path d="M2.5 13 V2.5 H12" stroke="#e8952e" stroke-width="2" fill="none"/><rect x="6.5" y="6.5" width="10" height="10" fill="#4f88cc" stroke="#dfe9f5" stroke-width="1.4"/></svg></div>
<div class="abs mi" id="mi12" style="left:1397px;top:647.6px;color:#dedede;transform:scaleX(1.0200);"><span class="k" style="margin-right:-43.20px">レイヤーをキャンバスに</span>合<span class="k" style="margin-right:-11.78px">わせる</span><span class="a">(I)</span></div>
<div class="abs" style="left:1368.0px;top:648.6px;width:18px;height:18px;"><svg viewBox="0 0 18 18" width="18" height="18"><rect x="1.5" y="1.5" width="12" height="10" fill="#d89a3a" stroke="#f1e4c8" stroke-width="1.4"/><rect x="4" y="4" width="6" height="4" fill="#7a4a20"/><path d="M2 12 H16.5 L15 17 H3.5 Z" fill="#f2f2f2"/><path d="M13 6 L17 8.5 L14 12" fill="#f2f2f2"/></svg></div>
<div class="abs mi" id="mi13" style="left:1397px;top:680.4px;color:#dedede;transform:scaleX(0.9634);"><span class="k" style="margin-right:-19.64px">レイヤーの</span>拡大<span class="k" style="margin-right:-3.93px">・</span>縮小<span class="a">(S)...</span></div>
<div class="abs" style="left:1368.0px;top:681.4px;width:18px;height:18px;"><svg viewBox="0 0 18 18" width="18" height="18"><path d="M1.5 1.5 L10 10" stroke="#e8952e" stroke-width="2.2"/><path d="M1 1 H7 L1 7 Z" fill="#e8952e"/><rect x="8" y="8" width="8.5" height="8.5" fill="#4f88cc" stroke="#dfe9f5" stroke-width="1.3"/></svg></div>
<div class="abs" style="left:1366px;top:713.0px;width:272px;height:2px;background:#262626;"></div><div class="abs" style="left:1366px;top:715.0px;width:272px;height:1px;background:#545454;"></div>
<div class="abs" style="left:1361px;top:727px;width:281px;height:31px;background:#141414;"></div>
<div class="abs mi" id="mi14" style="left:1397px;top:732.5px;color:#f0f0f0;transform:scaleX(0.9889);"><span class="k" style="margin-right:-31.42px">レイヤーマスクの</span>追加<span class="a">(Y)...</span></div>
<div class="abs" style="left:1368.0px;top:733.5px;width:18px;height:18px;"><svg viewBox="0 0 18 18" width="18" height="18"><rect x="3" y="1" width="9" height="9" fill="#cfcfcf"/><rect x="5" y="3" width="5" height="5" fill="#8a8a8a"/><path d="M1.5 8.5 H8 V11 H17 L14.5 17 H1.5 Z" fill="#f4f4f4"/></svg></div>
<div class="abs mi" id="mi15" style="left:1397px;top:765.6px;color:#8e8e8e;transform:scaleX(1.0189);"><span class="k" style="margin-right:-31.42px">レイヤーマスクの</span>適用<span class="a">(M)</span></div>
<div class="abs mi" id="mi16" style="left:1397px;top:798.0px;color:#8e8e8e;transform:scaleX(1.0015);"><span class="k" style="margin-right:-31.42px">レイヤーマスクの</span>削除<span class="a">(K)</span></div>
<div class="abs" style="left:1368.0px;top:799.0px;width:18px;height:18px;"><svg viewBox="0 0 18 18" width="18" height="18"><path d="M3.5 4 L14 14 M14 4 L3.5 14" stroke="#a04846" stroke-width="3.4" stroke-linecap="round" opacity="0.85"/></svg></div>
<div class="abs" style="left:1366px;top:831.4px;width:272px;height:2px;background:#262626;"></div><div class="abs" style="left:1366px;top:833.4px;width:272px;height:1px;background:#545454;"></div>
<div class="abs mi" id="mi17" style="left:1397px;top:851.0px;color:#8e8e8e;transform:scaleX(1.0140);"><span class="k" style="margin-right:-31.42px">レイヤーマスクの</span>表示<span class="a">(H)</span></div>
<div class="abs" style="left:1371.0px;top:852.5px;width:18px;height:18px;"><svg viewBox="0 0 18 18" width="18" height="18"><rect x="0.5" y="0.5" width="17" height="17" rx="3.5" fill="#262626"/></svg></div>
<div class="abs mi" id="mi18" style="left:1397px;top:883.6px;color:#8e8e8e;transform:scaleX(0.9938);"><span class="k" style="margin-right:-31.42px">レイヤーマスクの</span>編集<span class="a">(E)</span></div>
<div class="abs" style="left:1371.0px;top:885.1px;width:18px;height:18px;"><svg viewBox="0 0 18 18" width="18" height="18"><rect x="0.5" y="0.5" width="17" height="17" rx="3.5" fill="#262626"/></svg></div>
<div class="abs mi" id="mi19" style="left:1397px;top:916.0px;color:#8e8e8e;transform:scaleX(1.0046);"><span class="k" style="margin-right:-31.42px">レイヤーマスクの</span>無効化<span class="a">(D)</span></div>
<div class="abs" style="left:1371.0px;top:917.5px;width:18px;height:18px;"><svg viewBox="0 0 18 18" width="18" height="18"><rect x="0.5" y="0.5" width="17" height="17" rx="3.5" fill="#262626"/></svg></div>
<div class="abs" style="left:1366px;top:949.5px;width:272px;height:2px;background:#262626;"></div><div class="abs" style="left:1366px;top:951.5px;width:272px;height:1px;background:#545454;"></div>
<svg class="abs" id="capsvg" style="left:0;top:560px;overflow:visible" width="1400" height="260" viewBox="0 560 1400 260">
<defs>
<g id="capt" font-family="'Noto Sans CJK JP',sans-serif" font-weight="900" font-size="86" style="font-feature-settings:'palt' 1">
<text id="cap1" x="227.5 313 379.4 445.3 517.2 585 655.4" y="668">右クリックして</text>
<text id="cap2" x="226 259 343 418 496 569.7 649.8 729 801 880.7 967.7 1053.4 1091 1167 1250.5" y="770">「レイヤーマスクの追加」を選択</text>
</g>
</defs>
<use href="#capt" fill="#0c88ff" stroke="#0c88ff" stroke-width="27.5" stroke-linejoin="round" stroke-linecap="round"/>
<use href="#capt" fill="#ffffff" stroke="#ffffff" stroke-width="1.4" stroke-linejoin="round"/>
</svg>

<div class="abs" id="banner" style="left:1050px;top:0;width:674px;height:62px;background:linear-gradient(#040920 0%,#081340 45%,#0e2064 100%);"></div>
<div class="abs" style="left:1050px;top:62px;width:674px;height:2px;background:#1a1a1e;"></div>
<svg class="abs" style="left:1050px;top:0;overflow:visible" width="674" height="64" viewBox="1050 0 674 64">
<defs>
<linearGradient id="ttlG" x1="0" y1="0" x2="0" y2="1"><stop offset="0" stop-color="#ffffff"/><stop offset="0.55" stop-color="#f2f2f2"/><stop offset="1" stop-color="#bdbdc2"/></linearGradient>
<filter id="ttlS" x="-5%" y="-20%" width="110%" height="150%"><feDropShadow dx="1.5" dy="2" stdDeviation="1.5" flood-color="#000" flood-opacity="0.7"/></filter>
</defs>
<g transform="translate(1074.5 51) scale(0.95 1) skewX(-9)" filter="url(#ttlS)">
<text id="ttl" x="0" y="0" font-family="'Noto Sans CJK JP',sans-serif" font-weight="900" font-size="50" style="font-feature-settings:'palt' 1" fill="url(#ttlG)" stroke="url(#ttlG)" stroke-width="1.2" stroke-linejoin="round">レイヤーマスクで切り抜く方法</text>
</g>
</svg>

<!-- click highlight + cursor -->
<div class="abs" style="left:1465.5px;top:716px;width:71px;height:71px;border-radius:50%;background:rgba(200,190,0,0.6);"></div>
<svg class="abs" style="left:1491px;top:738.5px" width="19.8" height="27" viewBox="0 0 22 30"><path d="M3 2 L3 22.5 L8 18 L11.8 26.5 L15 25 L11.2 16.8 L18 16.5 Z" fill="#ffffff" stroke="#1a1a1a" stroke-width="1.4" stroke-linejoin="round"/></svg>
<!-- video player overlay -->
<div class="abs" style="left:0;top:927px;width:1724px;height:23px;background:linear-gradient(rgba(0,0,0,0.03),rgba(0,0,0,0.17));"></div>
<div class="abs" style="left:0;top:921.5px;width:1724px;height:1.2px;background:rgba(140,140,150,0.55);"></div>
<div class="abs" style="left:0;top:926px;width:1724px;height:1.2px;background:rgba(150,150,155,0.42);"></div>
<div class="abs" style="left:0;top:947px;width:1724px;height:1px;background:rgba(150,150,155,0.25);"></div>
<div class="abs" style="left:0;top:921px;width:470px;height:1.8px;background:#5f93dc;"></div>
<div class="abs" style="left:832px;top:938px;width:30px;height:30px;border-radius:50%;background:#69758a;border:2px solid #3a4150;box-shadow:0 0 2px 1px rgba(40,40,50,0.6);"></div>
<div class="abs" style="left:662px;top:946.5px;width:130px;height:12px;border-radius:8px;border:1.5px solid #aab0bb;background:rgba(235,235,238,0.6);"></div>

</div>
</body>
</html>
